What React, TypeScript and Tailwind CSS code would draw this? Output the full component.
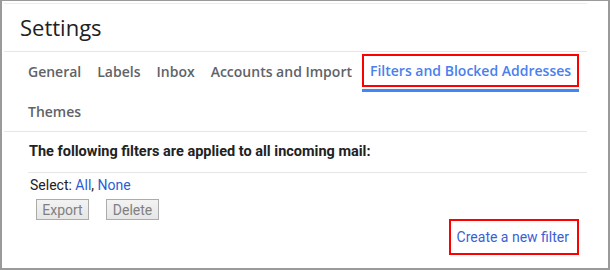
export default function App() {
    const tabs = ['General', 'Labels', 'Inbox', 'Accounts and Import'];

    return (
        <div className="w-[610px] h-[270px] bg-white border-2 border-t border-[#9a9a9a] overflow-hidden" style={{ fontFamily: 'Roboto, "Liberation Sans", sans-serif' }}>
            <div className="w-[583px] ml-[2px] mt-[2px] flex flex-col">
                <div className="h-px bg-[#ececec]" />

                {/* Header */}
                <div className="h-[47px] flex items-center pl-4 text-[22px] text-[#202124]" style={{ fontFamily: '"Open Sans", sans-serif' }}>
                    Settings
                </div>
                <div className="h-px bg-[#e6e6e6]" />

                {/* Tabs */}
                <div className="flex flex-wrap pl-4 text-[14px] font-semibold text-[#5f6368] h-[79px]" style={{ fontFamily: '"Open Sans", sans-serif' }}>
                    {tabs.map((t) => (
                        <div key={t} className="h-[40px] pt-[2px]">
                            <div className="h-[34px] px-1.5 flex items-center border-2 border-transparent">{t}</div>
                        </div>
                    ))}
                    <div className="h-[40px] pt-[2px] ml-[2px] flex flex-col">
                        <div className="h-[34px] px-1.5 flex items-center border-2 border-[#ff0000] text-[#4a80ee]">
                            Filters and Blocked Addresses
                        </div>
                        <div className="h-[3px] mt-[2px] bg-[#4285f4]" />
                    </div>
                    <div className="h-[40px] pt-[2px]">
                        <div className="h-[34px] px-1.5 flex items-center border-2 border-transparent">Themes</div>
                    </div>
                </div>
                <div className="h-px bg-[#e6e6e6]" />

                {/* Filters body */}
                <div className="pl-6 flex flex-col">
                    <div className="h-[40px] flex items-center pl-px text-[14.5px] font-bold text-[#222]">
                        The following filters are applied to all incoming mail:
                    </div>
                    <div className="h-px bg-[#e6e6e6]" />
                    <div className="h-[25px] flex items-center pl-[2px] text-[14px] text-[#222]">
                        Select:&nbsp;<span className="text-[#2a5ed6]">All</span>,&nbsp;<span className="text-[#2a5ed6]">None</span>
                    </div>
                    <div className="flex gap-[17px] pl-2 mt-px">
                        <button className="w-[53px] h-[21px] border border-[#ababab] bg-gradient-to-b from-[#f3f3f3] to-[#e6e6e6] text-[14px] text-[#808080]">
                            Export
                        </button>
                        <button className="w-[53px] h-[21px] border border-[#ababab] bg-gradient-to-b from-[#f3f3f3] to-[#e6e6e6] text-[14px] text-[#808080]">
                            Delete
                        </button>
                    </div>
                </div>
                <div className="flex justify-end pr-2 -mt-px">
                    <div className="h-[36px] pl-1.5 pr-2 flex items-center border-2 border-[#ff0000] text-[14px] text-[#3b5fd4]">
                        Create a new filter
                    </div>
                </div>
            </div>
        </div>
    );
}
